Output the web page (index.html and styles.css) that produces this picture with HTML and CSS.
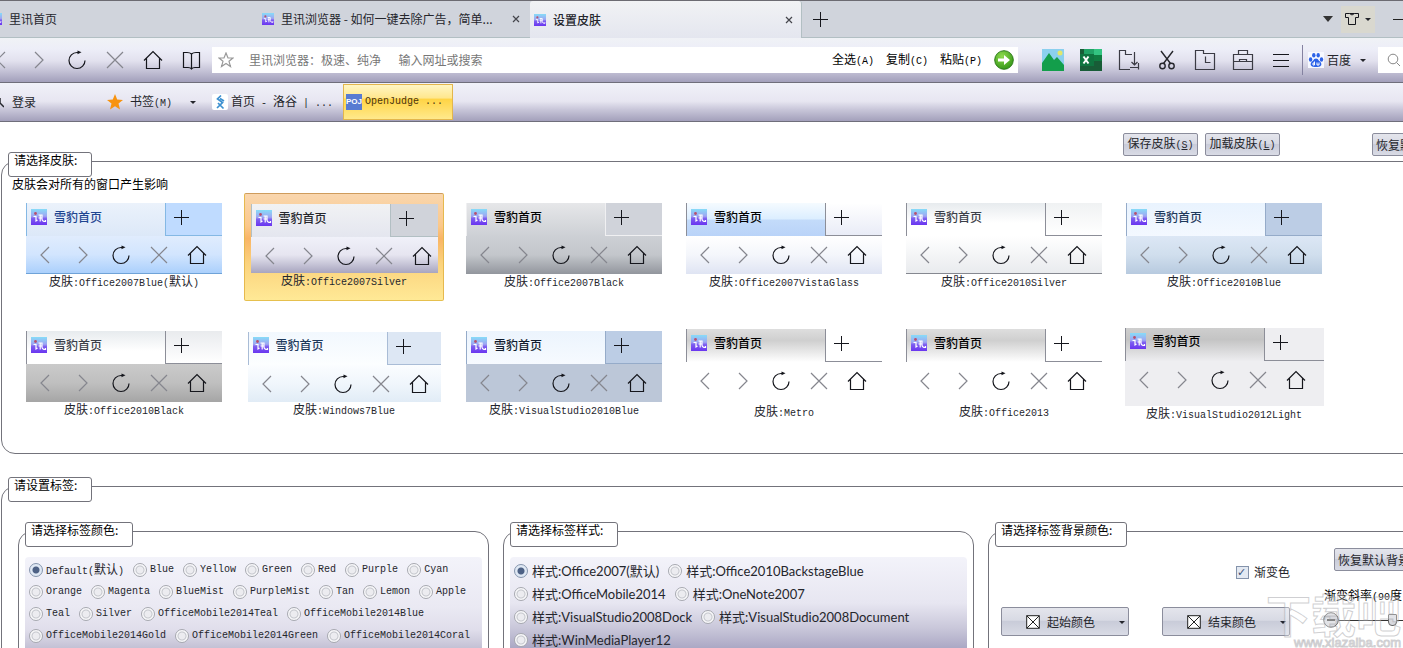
FILE: index.html
```html
<!DOCTYPE html>
<html lang="zh-CN">
<head>
    <meta charset="UTF-8">
    <meta name="viewport" content="width=device-width, initial-scale=1.0">
    <title>设置皮肤</title>
    <link rel="stylesheet" href="styles.css">
</head>
<body>
    <!-- shared icons -->
    <svg class="sprite" aria-hidden="true">
        <defs>
            <linearGradient id="logoFill" x1="0" y1="0" x2="0" y2="1">
                <stop offset="0" stop-color="#86dcf8"/>
                <stop offset="0.45" stop-color="#9fa6f2"/>
                <stop offset="0.6" stop-color="#7d5df0"/>
                <stop offset="1" stop-color="#6a35f0"/>
            </linearGradient>
            <radialGradient id="goFill" cx="0.4" cy="0.3" r="0.8">
                <stop offset="0" stop-color="#8edb4e"/>
                <stop offset="1" stop-color="#2c8f12"/>
            </radialGradient>
        </defs>
        <symbol id="logo" viewBox="0 0 16 16">
            <rect width="16" height="16" fill="url(#logoFill)"/>
            <path d="M2.500 7.500h2.500v4.500l1.500-1M7.500 6h3.500v4q0 2.500 3.500 2.500v-1.500M9.200 6v6.500M7.500 9h3" fill="none" stroke="#fff" stroke-width="1.200"/>
            <circle cx="4.500" cy="4.500" r="1.400" fill="#b8506e"/>
        </symbol>
        <symbol id="back" viewBox="0 0 24 24"><path d="M16 4L8 12l8 8" fill="none" stroke="#85868e" stroke-width="1.200"/></symbol>
        <symbol id="forward" viewBox="0 0 24 24"><path d="M8 4l8 8-8 8" fill="none" stroke="#85868e" stroke-width="1.200"/></symbol>
        <symbol id="reload" viewBox="0 0 24 24">
            <path d="M14 4.500H12a8 8 0 1 0 8 8" fill="none" stroke="#15161c" stroke-width="1.200"/>
            <path d="M12.500 2.500l4 1.700-4 2z" fill="#15161c"/>
        </symbol>
        <symbol id="stop" viewBox="0 0 24 24"><path d="M4 4l16 16M20 4L4 20" fill="none" stroke="#85868e" stroke-width="1.200"/></symbol>
        <symbol id="home" viewBox="0 0 24 24"><path d="M3 12.500l9-9 9 9M5.500 10.500v10h13v-10" fill="none" stroke="#15161c" stroke-width="1.200"/></symbol>
        <symbol id="plus" viewBox="0 0 16 16"><path d="M8.500 1v15M1 8.500h15" fill="none" stroke="#15161c"/></symbol>
        <symbol id="arrow" viewBox="0 0 8 8"><path d="M1 3h6L4 6z" fill="#25262c"/></symbol>
        <symbol id="close" viewBox="0 0 8 8"><path d="M1 1l6 6M7 1L1 7" fill="none" stroke="#45464c" stroke-width="1.200"/></symbol>
    </svg>

    <nav class="tab-bar">
        <div class="tabs">
            <div class="tab">
                <svg class="favicon"><use href="#logo"/></svg>
                <span class="tab-title">里讯首页</span>
            </div>
            <div class="tab">
                <svg class="favicon"><use href="#logo"/></svg>
                <span class="tab-title">里讯浏览器 - 如何一键去除广告，简单...</span>
                <button class="close" aria-label="关闭"><svg><use href="#close"/></svg></button>
            </div>
            <div class="tab active">
                <svg class="favicon"><use href="#logo"/></svg>
                <span class="tab-title">设置皮肤</span>
                <button class="close" aria-label="关闭"><svg><use href="#close"/></svg></button>
            </div>
        </div>
        <button class="new-tab" aria-label="新建标签"><svg><use href="#plus"/></svg></button>
        <div class="window-tools">
            <button class="tab-list" aria-label="标签列表"><svg viewBox="0 0 10 6"><path d="M0 0h10L5 6z" fill="#333"/></svg></button>
            <button class="skin-menu" aria-label="皮肤">
                <svg class="shirt" viewBox="0 0 14 14"><path d="M4.500 1.500H.5v4h3v7h7v-7h3v-4h-4q-2.500 3-5 0zh5" fill="none" stroke="#15161c"/></svg>
                <svg class="drop"><use href="#arrow"/></svg>
            </button>
            <button class="minimize" aria-label="最小化"><svg viewBox="0 0 10 10"><path d="M0 5.500h10" stroke="#222"/></svg></button>
        </div>
    </nav>

    <div class="toolbar">
        <div class="nav-icons">
            <button aria-label="后退"><svg><use href="#back"/></svg></button>
            <button aria-label="前进"><svg><use href="#forward"/></svg></button>
            <button aria-label="刷新"><svg><use href="#reload"/></svg></button>
            <button aria-label="停止"><svg><use href="#stop"/></svg></button>
            <button aria-label="主页"><svg><use href="#home"/></svg></button>
            <button aria-label="书签"><svg viewBox="0 0 24 24"><path d="M12.500 6Q11 4.500 8 4.500H4.500v15H9q2.500 0 3.500 1.500 1-1.500 3.500-1.500h4.500v-15H17q-3 0-4.500 1.500v14" fill="none" stroke="#15161c" stroke-width="1.200"/></svg></button>
        </div>
        <div class="address">
            <svg class="star" viewBox="0 0 16 16"><path d="M8 1l2 5h5l-4 3.300 1.500 5.200L8 11.500l-4.500 3L5 9.300 1 6h5z" fill="none" stroke="#999" stroke-width="1.200"/></svg>
            <input type="text" class="address-input" aria-label="地址" placeholder="里讯浏览器：极速、纯净　  输入网址或搜索">
            <button class="edit">全选<span class="en">(A)</span></button>
            <button class="edit">复制<span class="en">(C)</span></button>
            <button class="edit">粘贴<span class="en">(P)</span></button>
            <button class="go" aria-label="转到">
                <svg viewBox="0 0 20 20"><circle cx="10" cy="10" r="9.300" fill="url(#goFill)" stroke="#2f7d1c"/><path d="M4 8.500h6V5l6 5-6 5v-3.500H4z" fill="#fff"/></svg>
            </button>
        </div>
        <div class="tool-icons">
            <button aria-label="截图"><svg viewBox="0 0 22 22"><rect width="22" height="22" fill="#8bd0ee"/><circle cx="18" cy="4" r="2.500" fill="#e2e66b"/><path d="M0 14l7-10 5 7 3-3 7 8v6H0z" fill="#139e4b"/></svg></button>
            <button aria-label="表格"><svg viewBox="0 0 22 22"><rect width="22" height="22" fill="#185c37"/><path d="M4 0h10v11H4z" fill="#21a366"/><path d="M14 0h8v6h-8z" fill="#33c481"/><path d="M14 6h8v6h-8z" fill="#107c41"/><path d="M14 12h8v10h-8z" fill="#185c37"/><path d="M0 5h14v12H0z" fill="#0f7440"/><path d="M3.500 7.500l5 7M8.500 7.500l-5 7" stroke="#fff" stroke-width="2"/></svg></button>
            <button aria-label="下载"><svg viewBox="0 0 22 22"><path d="M12 20.500H1.500v-19h6v4H14M16.500 3v13M13.500 13l3 3 3-3M20.500 14v6.500M12 18.500h8" fill="none" stroke="#3b3b44" stroke-width="1.200"/></svg></button>
            <button aria-label="剪切"><svg viewBox="0 0 22 22"><g fill="none" stroke="#25262c" stroke-width="1.400"><path d="M5 2l9.500 12.500M17 2L7.500 14.500"/><circle cx="6.500" cy="17" r="2.700"/><circle cx="15.500" cy="17" r="2.700"/></g></svg></button>
            <button aria-label="历史"><svg viewBox="0 0 22 22"><path d="M1.500 1.500h8v3h11v16h-19zM11.500 7.500v6h5" fill="none" stroke="#3b3b44" stroke-width="1.200"/></svg></button>
            <button aria-label="工具箱"><svg viewBox="0 0 22 22"><path d="M1.500 5.500h19v15h-19zM6.500 5.500v-4h9v4M1.500 12.500h6v-2h7v2h6M7.500 12.500h7" fill="none" stroke="#3b3b44" stroke-width="1.200"/></svg></button>
            <button aria-label="菜单"><svg viewBox="0 0 22 22"><path d="M3 5.500h16M3 11.500h16M3 17.500h16" stroke="#15161c" stroke-width="1.200"/></svg></button>
        </div>
        <button class="engine">
            <svg class="paw" viewBox="0 0 16 16"><rect width="16" height="16" fill="#f6f8ff"/><g fill="#2c62e8"><ellipse cx="2.600" cy="7.500" rx="1.700" ry="2.200"/><ellipse cx="5.800" cy="3.200" rx="1.700" ry="2.300"/><ellipse cx="10.200" cy="3.200" rx="1.700" ry="2.300"/><ellipse cx="13.500" cy="7.500" rx="1.700" ry="2.200"/><path d="M8 6.500q2 0 3 2.300 3 2.200 2.200 4.500-.8 2.200-5.200 1.700-4.400.5-5.200-1.700-.8-2.300 2.200-4.500 1-2.300 3-2.300z"/></g><path d="M6.500 9.500v3.500H5v-2h1.500M9 10.500v2.500h2v-2.500" fill="none" stroke="#fff"/></svg>
            百度
            <svg class="drop"><use href="#arrow"/></svg>
        </button>
        <button class="search" aria-label="搜索"><svg viewBox="0 0 14 14"><circle cx="6" cy="6" r="4.800" fill="none" stroke="#888"/><path d="M9.500 9.500L13 13" stroke="#888"/></svg></button>
    </div>

    <div class="bookmark-bar">
        <button class="login"><svg viewBox="0 0 4 12"><path d="M0 2v5l4 4" fill="none" stroke="#25262c" stroke-width="1.500"/></svg>登录</button>
        <button class="bookmarks">
            <svg class="star" viewBox="0 0 16 16"><path d="M8 0l2.200 5.500 5.800.4-4.500 3.700L13 15.500l-5-3.300-5 3.300 1.500-5.900L0 5.900l5.800-.4z" fill="#f7930f"/></svg>
            <span>书签<span class="en">(M)</span></span>
            <svg class="drop"><use href="#arrow"/></svg>
        </button>
        <a class="bookmark" href="#">
            <svg viewBox="0 0 16 16"><rect width="16" height="16" rx="2" fill="#fff"/><path d="M9 1.500L5.500 5l5 3.500L5 14M6 9l5.500 5.500M8 4.500l4 2.500" fill="none" stroke="#3c90d0" stroke-width="1.700"/></svg>
            <span>首页<span class="en"> - </span>洛谷<span class="en"> | ...</span></span>
        </a>
        <a class="bookmark current" href="#"><span class="poj">POJ</span><span class="en">OpenJudge ...</span></a>
    </div>

    <main>
        <div class="actions">
            <button class="btn">保存皮肤<span class="en">(<u>S</u>)</span></button>
            <button class="btn">加载皮肤<span class="en">(<u>L</u>)</span></button>
            <button class="btn restore">恢复默认</button>
        </div>

        <section class="group skins">
            <h2 class="group-title">请选择皮肤:</h2>
            <p class="hint">皮肤会对所有的窗口产生影响</p>
            <div class="skin-grid" id="skinGrid"></div>
        </section>

        <section class="group settings">
            <h2 class="group-title">请设置标签:</h2>
            <div class="columns">
                <div class="group">
                    <h3 class="group-title">请选择标签颜色:</h3>
                    <div class="panel colors">
                        <div class="row">
                            <label><input type="radio" name="color" checked><span><span class="en">Default(</span>默认<span class="en">)</span></span></label>
                            <label><input type="radio" name="color"><span class="en">Blue</span></label>
                            <label><input type="radio" name="color"><span class="en">Yellow</span></label>
                            <label><input type="radio" name="color"><span class="en">Green</span></label>
                            <label><input type="radio" name="color"><span class="en">Red</span></label>
                            <label><input type="radio" name="color"><span class="en">Purple</span></label>
                            <label><input type="radio" name="color"><span class="en">Cyan</span></label>
                        </div>
                        <div class="row">
                            <label><input type="radio" name="color"><span class="en">Orange</span></label>
                            <label><input type="radio" name="color"><span class="en">Magenta</span></label>
                            <label><input type="radio" name="color"><span class="en">BlueMist</span></label>
                            <label><input type="radio" name="color"><span class="en">PurpleMist</span></label>
                            <label><input type="radio" name="color"><span class="en">Tan</span></label>
                            <label><input type="radio" name="color"><span class="en">Lemon</span></label>
                            <label><input type="radio" name="color"><span class="en">Apple</span></label>
                        </div>
                        <div class="row">
                            <label><input type="radio" name="color"><span class="en">Teal</span></label>
                            <label><input type="radio" name="color"><span class="en">Silver</span></label>
                            <label><input type="radio" name="color"><span class="en">OfficeMobile2014Teal</span></label>
                            <label><input type="radio" name="color"><span class="en">OfficeMobile2014Blue</span></label>
                        </div>
                        <div class="row">
                            <label><input type="radio" name="color"><span class="en">OfficeMobile2014Gold</span></label>
                            <label><input type="radio" name="color"><span class="en">OfficeMobile2014Green</span></label>
                            <label><input type="radio" name="color"><span class="en">OfficeMobile2014Coral</span></label>
                        </div>
                    </div>
                </div>

                <div class="group">
                    <h3 class="group-title">请选择标签样式:</h3>
                    <div class="panel styles">
                        <div class="row">
                            <label><input type="radio" name="style" checked>样式:Office2007(默认)</label>
                            <label><input type="radio" name="style">样式:Office2010BackstageBlue</label>
                        </div>
                        <div class="row">
                            <label><input type="radio" name="style">样式:OfficeMobile2014</label>
                            <label><input type="radio" name="style">样式:OneNote2007</label>
                        </div>
                        <div class="row">
                            <label><input type="radio" name="style">样式:VisualStudio2008Dock</label>
                            <label><input type="radio" name="style">样式:VisualStudio2008Document</label>
                        </div>
                        <div class="row">
                            <label><input type="radio" name="style">样式:WinMediaPlayer12</label>
                        </div>
                    </div>
                </div>

                <div class="group background">
                    <h3 class="group-title">请选择标签背景颜色:</h3>
                    <div class="background-form">
                        <div class="field">
                            <button class="btn color-btn"><svg class="swatch" viewBox="0 0 14 14"><path d="M.7.7h12.600v12.600H.7zl12.600 12.600M13.300.7L.7 13.300" fill="#fff" stroke="#222"/></svg>起始颜色<svg class="drop"><use href="#arrow"/></svg></button>
                        </div>
                        <div class="field">
                            <label class="check"><input type="checkbox" checked>渐变色</label>
                            <button class="btn color-btn"><svg class="swatch" viewBox="0 0 14 14"><path d="M.7.7h12.600v12.600H.7zl12.600 12.600M13.300.7L.7 13.300" fill="#fff" stroke="#222"/></svg>结束颜色<svg class="drop"><use href="#arrow"/></svg></button>
                        </div>
                        <div class="field angle">
                            <button class="btn restore-bg">恢复默认背景</button>
                            <label for="angle">渐变斜率<span class="en">(90</span>度</label>
                            <div class="slider">
                                <button class="minus" aria-label="减小"><svg viewBox="0 0 16 16"><circle cx="8" cy="8" r="7.300" fill="#d8d9de" stroke="#666"/><path d="M4 8h8" stroke="#555" stroke-width="2"/></svg></button>
                                <input type="range" id="angle" min="0" max="180" value="90">
                            </div>
                        </div>
                    </div>
                </div>
            </div>
        </section>
    </main>

    <div class="watermark">
        <div class="watermark-name">下载吧</div>
        <div class="watermark-url">www.xiazaiba.com</div>
    </div>

    <script>
        const skins = [
            { name: 'Office2007Blue', note: '默认', css: 'blue-2007' },
            { name: 'Office2007Silver', css: 'silver-2007', selected: true },
            { name: 'Office2007Black', css: 'black-2007' },
            { name: 'Office2007VistaGlass', css: 'vista-glass' },
            { name: 'Office2010Silver', css: 'silver-2010' },
            { name: 'Office2010Blue', css: 'blue-2010' },
            { name: 'Office2010Black', css: 'black-2010' },
            { name: 'Windows7Blue', css: 'windows7' },
            { name: 'VisualStudio2010Blue', css: 'vs2010' },
            { name: 'Metro', css: 'metro' },
            { name: 'Office2013', css: 'metro office-2013' },
            { name: 'VisualStudio2012Light', css: 'metro vs2012' }
        ];
        const icons = ['back', 'forward', 'reload', 'stop', 'home'];
        const skinGrid = document.getElementById('skinGrid');

        skins.forEach(function(skin) {
            const button = document.createElement('button');
            button.className = 'skin' + (skin.selected ? ' selected' : '');
            const note = skin.note ? '<span class="en">(</span>' + skin.note + '<span class="en">)</span>' : '';
            button.innerHTML =
                '<span class="preview ' + skin.css + '">' +
                    '<span class="preview-tabs">' +
                        '<span class="preview-tab"><svg class="logo"><use href="#logo"/></svg>雪豹首页</span>' +
                        '<span class="preview-new"><svg><use href="#plus"/></svg></span>' +
                    '</span>' +
                    '<span class="preview-tools">' +
                        icons.map(icon => '<svg><use href="#' + icon + '"/></svg>').join('') +
                    '</span>' +
                '</span>' +
                '<span class="skin-name">皮肤<span class="en">:' + skin.name + '</span>' + note + '</span>';
            button.addEventListener('click', function() {
                skinGrid.querySelector('.selected').classList.remove('selected');
                button.classList.add('selected');
            });
            skinGrid.appendChild(button);
        });
    </script>
</body>
</html>
```

FILE: styles.css
```css
* {
    box-sizing: border-box;
}

body {
    margin: 0;
    height: 100vh;
    overflow: hidden;
    background: #fff;
    color: #25262c;
    font-family: "Noto Sans CJK SC", sans-serif;
    font-size: 12px;
    line-height: 14px;
}

button {
    margin: 0;
    padding: 0;
    border: none;
    background: none;
    color: inherit;
    font: inherit;
    white-space: nowrap;
    cursor: pointer;
}

svg {
    display: block;
    flex: none;
}

a {
    color: inherit;
    text-decoration: none;
}

h2, h3, p {
    margin: 0;
    font-size: 12px;
    font-weight: normal;
}

.sprite {
    position: absolute;
    width: 0;
    height: 0;
}

.en {
    font-family: "Liberation Mono", monospace;
    font-size: 10px;
}

.drop {
    width: 8px;
    height: 8px;
}

/* tab bar */
.tab-bar {
    display: flex;
    height: 38px;
    background: #d0d4dc;
    border-top: 1px solid #6c6b72;
    border-bottom: 1px solid #b2bfc3;
}

.tabs {
    display: flex;
    margin-left: -14px;
}

.tab {
    display: flex;
    align-items: center;
    gap: 7px;
    width: 272px;
    padding: 0 10px 0 4px;
}

.tab.active {
    height: 37px;
    padding-right: 8px;
    background: linear-gradient(#f1f2f4, #e4e6ef);
    border-right: 1px solid #b2bfc3;
    border-radius: 3px 3px 0 0;
    font-weight: 500;
}

.favicon {
    width: 12px;
    height: 12px;
}

.tab-title {
    flex: 1;
    white-space: nowrap;
}

.close svg {
    width: 8px;
    height: 8px;
}

.new-tab {
    margin-left: 10px;
}

.new-tab svg {
    width: 16px;
    height: 16px;
}

.window-tools {
    display: flex;
    align-items: center;
    margin-left: auto;
}

.tab-list svg {
    width: 10px;
    height: 6px;
}

.skin-menu {
    display: flex;
    align-items: center;
    gap: 5px;
    height: 27px;
    margin: 0 18px 0 8px;
    padding: 0 3px 0 4px;
    background: #d9d8cf;
}

.shirt {
    width: 14px;
    height: 14px;
}

.minimize svg {
    width: 10px;
    height: 10px;
}

/* toolbar */
.toolbar {
    display: flex;
    align-items: center;
    height: 45px;
    background: linear-gradient(#f0f2f6, #edeef8 25%, #e2e1ee 52%, #c4c2d6 75%, #a29fbb);
    border-bottom: 1px solid #6f6e7b;
}

.nav-icons, .tool-icons {
    display: flex;
}

.nav-icons {
    margin-left: -18px;
}

.nav-icons button, .tool-icons button {
    display: flex;
    justify-content: center;
    width: 38px;
}

.nav-icons svg {
    width: 24px;
    height: 24px;
}

.tool-icons svg {
    width: 22px;
    height: 22px;
}

.address {
    display: flex;
    flex: 1;
    align-items: center;
    gap: 12px;
    height: 26px;
    margin: 0 16px 0 2px;
    padding: 0 4px 0 6px;
    background: #fff;
    color: #000;
}

.star {
    width: 16px;
    height: 16px;
}

.address-input {
    flex: 1;
    min-width: 0;
    padding: 0 3px;
    border: none;
    outline: none;
    background: none;
    font: inherit;
}

.address-input::placeholder {
    color: #777;
}

.go svg {
    width: 20px;
    height: 20px;
}

.engine {
    display: flex;
    align-items: center;
    gap: 3px;
    height: 30px;
    margin: 0 11px 0 2px;
    padding-left: 5px;
    border-left: 1px solid #8482a0;
}

.engine .drop {
    margin-left: 5px;
}

.paw {
    width: 16px;
    height: 16px;
}

.search {
    width: 25px;
    height: 26px;
    padding-left: 9px;
    background: #fff;
}

.search svg {
    width: 14px;
    height: 14px;
}

/* bookmark bar */
.bookmark-bar {
    display: flex;
    align-items: center;
    height: 39px;
    background: linear-gradient(#f0f1f9, #e7e6f1 48%, #c8c6d9 70%, #a3a0bb);
    border-bottom: 1px solid #6f6e7b;
}

.login {
    display: flex;
    align-items: center;
    gap: 8px;
    width: 107px;
}

.login svg {
    width: 4px;
    height: 12px;
}

.bookmarks {
    display: flex;
    align-items: center;
    gap: 7px;
    width: 105px;
}

.bookmarks .drop {
    margin-left: 10px;
}

.bookmark {
    display: flex;
    align-items: center;
    gap: 3px;
    width: 131px;
    white-space: nowrap;
}

.bookmark .en {
    white-space: pre;
}

.bookmark svg {
    width: 16px;
    height: 16px;
}

.bookmark.current {
    width: 110px;
    height: 36px;
    padding: 0 2px;
    border: 1px solid #e3b64c;
    background: linear-gradient(#fff6c4, #ffe78e 38%, #ffd445 42%, #ffe98c);
    color: #4a3510;
}

.poj {
    padding: 1px 0;
    background: #587bd2;
    color: #fff;
    font-family: "Liberation Sans", sans-serif;
    font-size: 8px;
    font-weight: bold;
}

/* buttons */
.btn {
    height: 23px;
    padding: 0 3px;
    border: 1px solid #8b8d9c;
    border-radius: 2px;
    background: linear-gradient(#e4e5ec, #d8dae4 45%, #c9ccd9 50%, #d9dbe5);
}

.actions {
    display: flex;
    justify-content: flex-end;
    gap: 7px;
    padding-top: 11px;
}

.actions .btn {
    width: 75px;
}

.actions .restore {
    margin: 0 -44px 0 85px;
}

.restore, .restore-bg {
    text-align: left;
}

/* group boxes */
.group {
    border: 1px solid #73737b;
    border-radius: 14px;
}

.group-title {
    display: table;
    margin: -10px 0 0 6px;
    padding: 0 14px 9px 5px;
    border: 1px solid #73737b;
    border-radius: 3px;
    background: #fff;
    color: #000;
    white-space: nowrap;
}

.skins {
    height: 293px;
    margin: 5px -20px 0 1px;
}

.settings {
    height: 240px;
    margin: 32px -20px 0 1px;
}

.hint {
    padding: 0 10px 2px;
    color: #000;
}

/* skin previews */
.skin-grid {
    display: grid;
    grid-template-columns: repeat(6, 200px);
    gap: 20px;
    padding: 0 22px;
}

.skin {
    display: flex;
    flex-direction: column;
    align-items: center;
    justify-content: center;
    height: 108px;
    border: 1px solid transparent;
    border-radius: 2px;
}

.skin.selected {
    border-color: #cf9c5c #e6b94e #e6c04e;
    background: linear-gradient(#f9d6ae, #fbc88a 30%, #f9b566 42%, #fbd27c 65%, #ffe996);
}

.preview {
    width: 196px;
    height: 71px;
    display: flex;
    flex-direction: column;
    overflow: hidden;
    --line: #8c8e98;
    --tab: linear-gradient(#e8e9ed, #fff);
    --new: #d0d3da;
    --tools: #fff;
    --text: #25262c;
}

.preview-tabs {
    display: flex;
    height: 33px;
}

.preview-tab {
    display: flex;
    align-items: center;
    gap: 7px;
    width: 139px;
    padding: 0 0 6px 4px;
    border-left: 1px solid var(--line);
    background: var(--tab);
    color: var(--text);
    font-weight: 500;
}

.preview .logo {
    width: 16px;
    height: 16px;
}

.preview-new {
    flex: 1;
    padding: 6px 7px;
    border: 1px solid var(--line);
    border-width: 0 0 1px 1px;
    background: var(--new);
}

.preview-new svg {
    width: 16px;
    height: 16px;
}

.preview-tools {
    display: flex;
    flex: 1;
    padding-top: 7px;
    background: var(--tools);
}

.preview-tools svg {
    width: 24px;
    height: 24px;
    margin: 0 7px;
}

.skin-name {
    color: #25262c;
}

.blue-2007 {
    --line: #84b8e4;
    --tab: linear-gradient(#ebf2fb, #dce8f8);
    --new: #bfdbff;
    --tools: linear-gradient(#e0ecfd, #d2e5fe 50%, #abd0fc);
    --text: #1e4590;
    border-bottom: 1px solid #6fa3d8;
}

.silver-2007 {
    width: 187px;
    height: 69px;
    --line: #b2bfc3;
    --tab: linear-gradient(#f1f2f4, #e4e6ef);
    --tools: linear-gradient(#f0f1f9, #e6e5f0 50%, #a8a5bf);
}

.black-2007 {
    --line: #f0f0f2;
    --tab: linear-gradient(#e6e7e9, #cdd0d5);
    --tools: linear-gradient(#cdd0d5, #c3c6cb 50%, #92969d);
    --text: #000;
}

.vista-glass {
    --tab: linear-gradient(#f5fbff, #dceeff 48%, #c3dbfa 52%, #b9d3f8);
    --new: linear-gradient(#fff, #e9ecf7);
    --tools: linear-gradient(#fff, #f4f6fb 50%, #dfe4f3);
    --text: #000;
}

.silver-2010 {
    --tab: linear-gradient(#e7ebee, #fff 60%);
    --new: linear-gradient(#f0f2f3, #fff);
    --tools: linear-gradient(#fff, #e9ebee);
    --text: #3b3f48;
    border-bottom: 1px solid #858890;
}

.blue-2010 {
    --line: #95abc9;
    --tab: linear-gradient(#e9f3fe, #f3f8ff);
    --new: #bccde5;
    --tools: linear-gradient(#dce7f5, #d0deed 50%, #b7cadf);
    --text: #1e395b;
}

.black-2010 {
    --tab: linear-gradient(#e7ebee, #fff 60%);
    --new: linear-gradient(#e9ebee, #fff);
    --tools: linear-gradient(#cacaca, #bfbfbf 50%, #a5a5a5);
    --text: #3b3f48;
}

.windows7 {
    width: 193px;
    height: 70px;
    --line: #a9bcd6;
    --tab: linear-gradient(#f2f8fe, #fcfeff);
    --new: #dde7f4;
    --tools: linear-gradient(#fbfdff, #f0f6fc 50%, #e1ecf6);
    --text: #1e395b;
}

.vs2010 {
    --line: #95abc9;
    --tab: linear-gradient(#ecf4fd, #f6faff);
    --new: #bccde5;
    --tools: #bcc7d8;
    --text: #111c2d;
}

.metro {
    height: 75px;
    --tab: linear-gradient(#dedede, #cfcfcf 35%, #fff);
    --new: #fff;
    --text: #000;
}

.vs2012 {
    width: 199px;
    height: 78px;
    --tab: linear-gradient(#cecece, #c4c4c4 35%, #ededf0);
    --new: #eeeef1;
    --tools: #eeeef1;
}

/* tag settings */
.columns {
    display: grid;
    grid-template-columns: 471px 471px 1fr;
    gap: 14px;
    padding: 29px 16px;
}

.panel {
    margin: 10px 6px;
    padding: 2px 4px;
    border-radius: 4px;
}

.row {
    display: flex;
    gap: 9px;
}

.row label {
    display: flex;
    align-items: center;
    gap: 3px;
    white-space: nowrap;
}

.colors {
    padding-bottom: 22px;
    background: linear-gradient(#f3f3fa, #eae9f3 45%, #e0deeb 65%, #a3a0bb);
}

.colors .row {
    height: 22px;
}

.styles {
    background: linear-gradient(#f3f3fa, #e7e6f1 48%, #c8c6d9 75%, #a3a0bf);
    font-family: Lato, "Noto Sans CJK SC", sans-serif;
    font-size: 13px;
}

.styles .row {
    height: 23px;
}

.styles .row label {
    gap: 4px;
}

input[type="radio"] {
    appearance: none;
    width: 14px;
    height: 14px;
    margin: 0;
    border: 1px solid #a7a9b0;
    border-radius: 50%;
    background: radial-gradient(#ececf0 3px, #c4c6cc 4px, #f8f8fa 5px);
}

input[type="radio"]:checked {
    border-color: #8595ad;
    background: radial-gradient(#4d6185 3px, #dfe8f4 4px);
}

.background-form {
    display: flex;
    align-items: flex-end;
    gap: 33px;
    padding: 1px 12px;
}

.field {
    display: flex;
    flex: none;
    flex-direction: column;
    width: 128px;
}

.check {
    display: flex;
    align-self: flex-end;
    align-items: center;
    gap: 5px;
    margin-bottom: 28px;
}

.check input {
    appearance: none;
    width: 13px;
    height: 13px;
    margin: 0;
    border: 1px solid #8493ab;
    background: #e3e9f2;
}

.check input:checked::after {
    content: "✓";
    display: block;
    color: #3d5379;
    font: bold 11px/11px "DejaVu Sans", sans-serif;
}

.color-btn {
    display: flex;
    align-items: center;
    justify-content: flex-end;
    gap: 7px;
    height: 29px;
    padding: 0 2px;
}

.color-btn .drop {
    margin-left: 16px;
}

.swatch {
    width: 14px;
    height: 14px;
}

.angle label {
    padding: 17px 0 7px 1px;
    color: #000;
}

.restore-bg {
    width: 90px;
    margin-left: 11px;
}

.slider {
    display: flex;
    align-items: center;
    padding-bottom: 8px;
}

.minus svg {
    width: 16px;
    height: 16px;
}

.slider input {
    appearance: none;
    width: 106px;
    height: 16px;
    margin: 0;
    background: linear-gradient(#333, #333) center / 100% 1px no-repeat;
}

.slider input::-webkit-slider-thumb {
    appearance: none;
    width: 9px;
    height: 12px;
    border: 1px solid #666;
    border-radius: 1px 1px 4px 4px;
    background: #d8d9de;
}

/* watermark over the corner of the page */
.watermark {
    position: absolute;
    right: 2px;
    bottom: 0;
    pointer-events: none;
    color: rgba(255, 255, 255, 0.3);
    text-align: right;
    -webkit-text-stroke: 1px rgba(160, 160, 165, 0.5);
}

.watermark-name {
    font-size: 45px;
    font-weight: bold;
    line-height: 46px;
}

.watermark-url {
    font-family: "Liberation Sans", sans-serif;
    font-size: 13px;
    line-height: 11px;
}
```
